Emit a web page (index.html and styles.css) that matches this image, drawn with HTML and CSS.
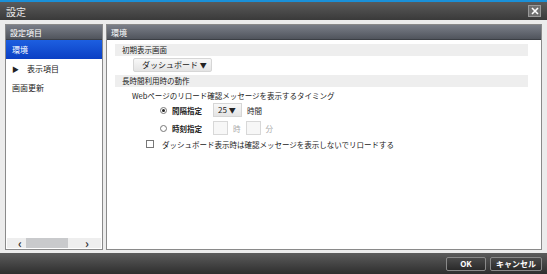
FILE: index.html
```html
<!DOCTYPE html>
<html lang="ja">
<head>
    <meta charset="UTF-8">
    <title>設定</title>
    <link rel="stylesheet" href="styles.css">
</head>
<body>
    <div class="dialog">
        <header class="titlebar">
            <span class="title">設定</span>
            <button class="close-button">
                <svg width="8" height="8" viewBox="0 0 8 8"><path d="M1 1L7 7M7 1L1 7" stroke="#fff" stroke-width="1.6"/></svg>
            </button>
        </header>

        <div class="main">
            <!-- left tree -->
            <aside class="sidebar">
                <div class="panel-head">設定項目</div>
                <ul class="nav">
                    <li class="active">環境</li>
                    <li><span class="arrow">&#9654;</span>表示項目</li>
                    <li>画面更新</li>
                </ul>
                <div class="hscroll">
                    <span class="chev">&lsaquo;</span>
                    <span class="thumb"></span>
                    <span class="chev right">&rsaquo;</span>
                </div>
            </aside>

            <!-- settings -->
            <main class="content">
                <div class="panel-head">環境</div>
                <div class="body">
                    <div class="group-title">初期表示画面</div>
                    <div class="dropdown">ダッシュボード <span class="tri">&#9660;</span></div>

                    <div class="group-title">長時間利用時の動作</div>
                    <p class="label">Webページのリロード確認メッセージを表示するタイミング</p>

                    <div class="option-row">
                        <span class="radio checked"></span>
                        <span class="bold">間隔指定</span>
                        <span class="select">25 <span class="tri">&#9660;</span></span>
                        <span>時間</span>
                    </div>
                    <div class="option-row">
                        <span class="radio"></span>
                        <span class="bold">時刻指定</span>
                        <span class="field"></span>
                        <span class="muted">時</span>
                        <span class="field"></span>
                        <span class="muted">分</span>
                    </div>
                    <div class="check-row">
                        <span class="checkbox"></span>
                        <span>ダッシュボード表示時は確認メッセージを表示しないでリロードする</span>
                    </div>
                </div>
            </main>
        </div>

        <footer class="footer">
            <button class="dlg-button ok">OK</button>
            <button class="dlg-button">キャンセル</button>
        </footer>
    </div>
</body>
</html>
```

FILE: styles.css
```css
* {
    box-sizing: border-box;
    margin: 0;
    padding: 0;
}

body {
    font-family: "Noto Sans CJK JP", "Noto Sans", sans-serif;
    font-size: 7.5px;
    color: #222;
    background: #ececec;
}

.dialog {
    display: flex;
    flex-direction: column;
    width: 547px;
    height: 274px;
}

.titlebar {
    height: 20px;
    border-top: 2px solid #1a90d8;
    background: linear-gradient(#5a5a5a, #3a3a3a);
    display: flex;
    align-items: center;
    justify-content: space-between;
    padding: 0 6px 0 6px;
}

.title {
    color: #e8e8e8;
    font-size: 10px;
}

.close-button {
    width: 13px;
    height: 12px;
    background: #707070;
    border: 1px solid #999;
    display: flex;
    align-items: center;
    justify-content: center;
}

.main {
    flex: 1;
    display: flex;
    gap: 3px;
    padding: 4px 5px 3px 5px;
    background: #ececec;
}

.sidebar,
.content {
    display: flex;
    flex-direction: column;
    background: #fff;
    border: 1px solid #8a8a8a;
}

.sidebar {
    width: 98px;
}

.content {
    flex: 1;
}

.panel-head {
    height: 15px;
    line-height: 15px;
    padding-left: 4px;
    color: #fff;
    font-size: 8px;
    background: linear-gradient(#7a7e88, #50545c);
    border-bottom: 1px solid #3c3f45;
}

.nav {
    list-style: none;
    flex: 1;
}

.nav li {
    height: 19px;
    line-height: 19px;
    padding-left: 6px;
    font-size: 8px;
}

.nav li.active {
    color: #fff;
    background: linear-gradient(#1d5fe0, #0a3fc4);
}

.arrow {
    font-size: 7px;
    margin-right: 8px;
}

.hscroll {
    height: 10px;
    margin: 0 1px 1px 1px;
    background: #eeeeee;
    display: flex;
    align-items: center;
    padding: 0 4px 0 11px;
}

.chev {
    font-size: 12px;
    font-weight: bold;
    color: #333;
    line-height: 10px;
}

.thumb {
    width: 42px;
    height: 10px;
    background: #c9cacc;
    margin: 0 17px 0 4px;
}

.body {
    padding: 4px 13px 0 8px;
}

.group-title {
    height: 12px;
    line-height: 12px;
    padding-left: 7px;
    background: #eeeeee;
}

.dropdown {
    display: inline-block;
    margin: 2px 0 3px 18px;
    height: 14px;
    line-height: 12px;
    padding: 0 4px 0 8px;
    border: 1px solid #d6d6d6;
    border-radius: 2px;
    background: linear-gradient(#f8f8f8, #e4e4e4);
    font-size: 8px;
}

.tri {
    font-size: 7px;
}

.label {
    margin: 3px 0 0 17px;
    height: 11px;
    line-height: 11px;
}

.option-row {
    display: flex;
    align-items: center;
    gap: 5px;
    height: 18px;
    margin-left: 45px;
}

.option-row:first-of-type {
    margin-top: 3px;
}

.bold {
    font-weight: 600;
    margin-right: 6px;
}

.radio {
    width: 7px;
    height: 7px;
    border: 1px solid #777;
    border-radius: 50%;
    position: relative;
}

.radio.checked::after {
    content: "";
    position: absolute;
    left: 1px;
    top: 1px;
    width: 3px;
    height: 3px;
    border-radius: 50%;
    background: #222;
}

.select {
    width: 29px;
    height: 14px;
    line-height: 12px;
    padding-left: 4px;
    border: 1px solid #d6d6d6;
    background: linear-gradient(#f8f8f8, #e4e4e4);
    font-size: 8px;
    white-space: nowrap;
}

.field {
    width: 15px;
    height: 14px;
    border: 1px solid #d8d8d8;
    background: #f7f7f7;
}

.muted {
    color: #aaa;
}

.check-row {
    display: flex;
    align-items: center;
    gap: 8px;
    margin: 0 0 0 31px;
    height: 14px;
}

.checkbox {
    width: 8px;
    height: 8px;
    border: 1px solid #777;
}

.footer {
    height: 21px;
    background: linear-gradient(#5c5c5c, #2e2e2e);
    display: flex;
    align-items: center;
    justify-content: flex-end;
    gap: 4px;
    padding-right: 5px;
}

.dlg-button {
    height: 14px;
    padding: 0 5px;
    font-family: inherit;
    font-size: 8px;
    font-weight: bold;
    color: #fff;
    background: linear-gradient(#4a4a4a, #2a2a2a);
    border: 1px solid #8a8a8a;
    border-radius: 2px;
}

.dlg-button.ok {
    width: 40px;
}
```
